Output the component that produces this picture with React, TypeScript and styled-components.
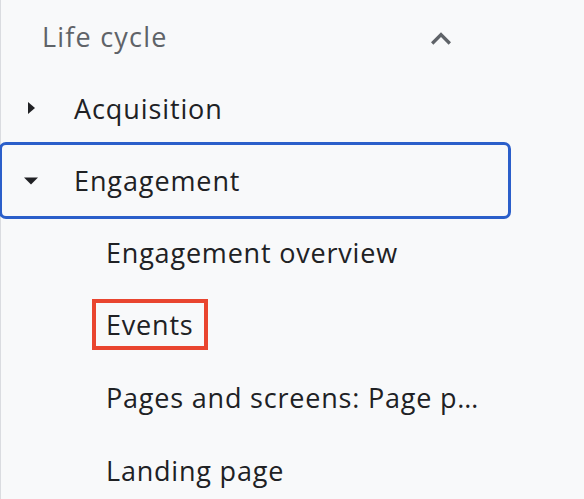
import React from "react";
import styled, { createGlobalStyle } from "styled-components";

const Global = createGlobalStyle`
  html, body { margin: 0; padding: 0; background: #f8f9fa; }
  body { font-family: "Open Sans", "Liberation Sans", sans-serif; }
`;

const Nav = styled.nav`
  width: 511px;
  min-height: 499px;
  border-left: 1px solid #dadce0;
  background: #f8f9fa;
  box-sizing: border-box;
  padding-top: 1px;
`;

const Header = styled.div`
  height: 71px;
  display: flex;
  align-items: center;
  justify-content: space-between;
  padding-left: 41px;
  padding-right: 50px;
`;

const HeaderTitle = styled.span`
  font-size: 27px;
  letter-spacing: 1.2px;
  color: #5f6368;
  line-height: 1;
`;

const ChevronBox = styled.span`
  width: 40px;
  height: 40px;
  display: flex;
  align-items: center;
  justify-content: center;
  margin-top: 4px;
`;

const Row = styled.div<{ $active?: boolean }>`
  height: 72.4px;
  display: flex;
  align-items: center;
  box-sizing: border-box;
  padding-left: 23px;
  border-radius: 5px;
  outline: ${(p) => (p.$active ? "3px solid #2b5fca" : "none")};
  outline-offset: -1px;
  margin-right: 2px;
`;

const Caret = styled.span`
  width: 14px;
  height: 14px;
  display: flex;
  align-items: center;
  justify-content: center;
  margin-right: 36px;
`;

const Label = styled.span`
  font-size: 27px;
  letter-spacing: 0.9px;
  color: #202124;
  line-height: 1;
  white-space: nowrap;
`;

const SubRow = styled.div`
  height: 72.4px;
  display: flex;
  align-items: center;
  padding-left: 105px;
`;

const SubLabel = styled.span`
  font-size: 27px;
  letter-spacing: 0.8px;
  color: #202124;
  line-height: 1.3;
  white-space: nowrap;
`;

const Highlight = styled.span`
  display: flex;
  align-items: center;
  height: 51px;
  box-sizing: border-box;
  border: 4px solid #e9452f;
  padding: 0 10px 0 10px;
  margin-left: -14px;
  margin-top: -2px;
`;

const ChevronUp = () => (
  <svg width="40" height="40" viewBox="0 0 24 24" aria-hidden>
    <path d="M12 8l-6 6 1.41 1.41L12 10.83l4.59 4.58L18 14z" fill="#5f6368" />
  </svg>
);

const ArrowRight = () => (
  <svg width="14" height="14" viewBox="0 0 14 14" aria-hidden>
    <path d="M4 1l7 6-7 6z" fill="#202124" />
  </svg>
);

const ArrowDown = () => (
  <svg width="14" height="14" viewBox="0 0 14 14" aria-hidden>
    <path d="M0 3.5h14l-7 7z" fill="#202124" />
  </svg>
);

export default function App() {
  return (
    <>
      <Global />
      <Nav>
        <Header>
          <HeaderTitle>Life cycle</HeaderTitle>
          <ChevronBox>
            <ChevronUp />
          </ChevronBox>
        </Header>
        <Row>
          <Caret>
            <ArrowRight />
          </Caret>
          <Label>Acquisition</Label>
        </Row>
        <Row $active>
          <Caret>
            <ArrowDown />
          </Caret>
          <Label>Engagement</Label>
        </Row>
        <SubRow>
          <SubLabel>Engagement overview</SubLabel>
        </SubRow>
        <SubRow>
          <Highlight>
            <SubLabel>Events</SubLabel>
          </Highlight>
        </SubRow>
        <SubRow>
          <SubLabel>Pages and screens: Page p…</SubLabel>
        </SubRow>
        <SubRow>
          <SubLabel>Landing page</SubLabel>
        </SubRow>
      </Nav>
    </>
  );
}
